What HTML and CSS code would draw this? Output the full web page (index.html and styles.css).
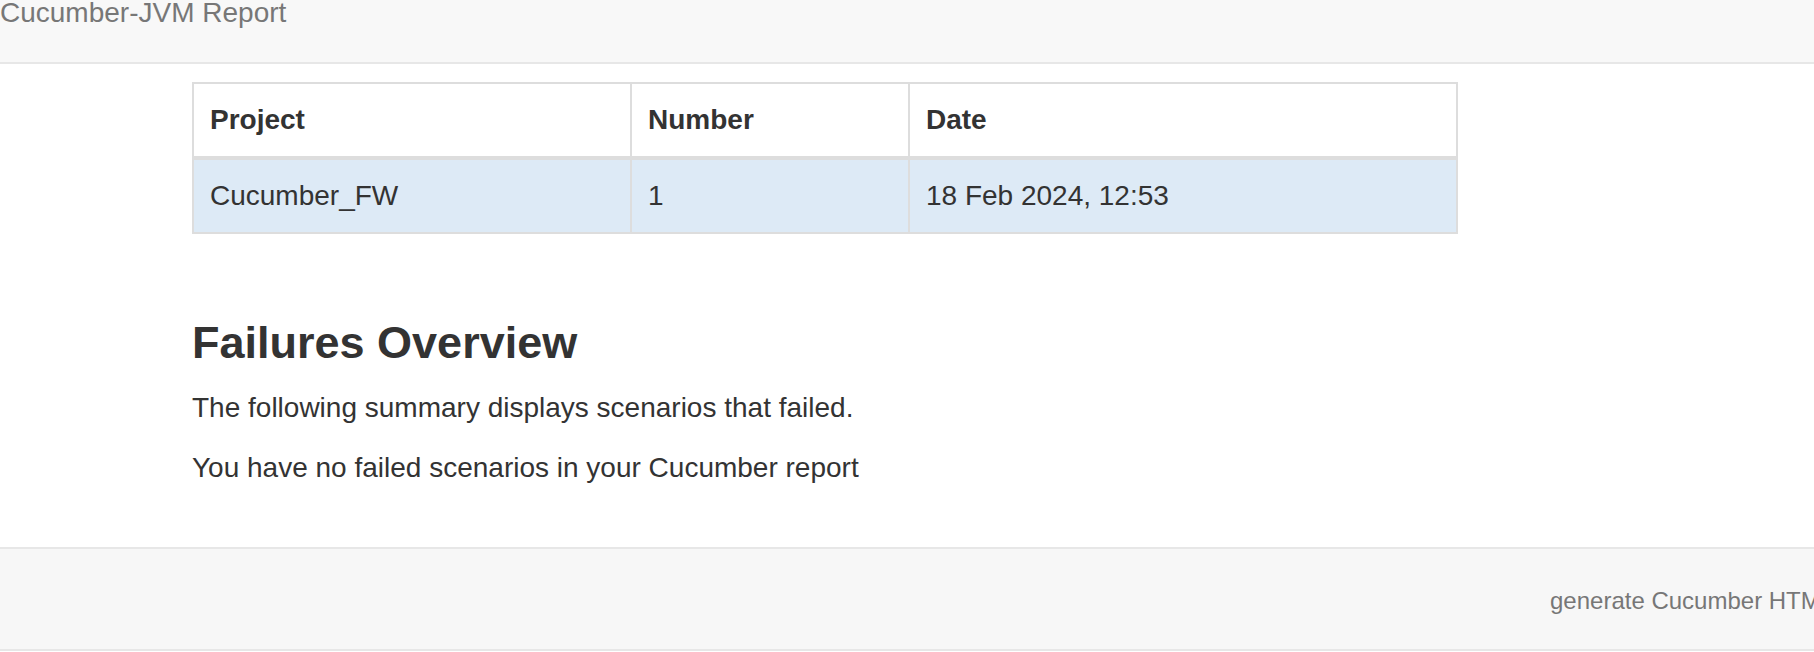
FILE: index.html
```html
<!DOCTYPE html>
<html lang="en">
<head>
<meta charset="utf-8">
<title>Cucumber-JVM Report</title>
<link rel="stylesheet" href="styles.css">
</head>
<body>
<header class="navbar">
  <div class="brand">Cucumber-JVM Report</div>
</header>
<main class="container">
  <table class="build-table">
    <colgroup>
      <col class="col-project">
      <col class="col-number">
      <col class="col-date">
    </colgroup>
    <thead>
      <tr>
        <th>Project</th>
        <th>Number</th>
        <th>Date</th>
      </tr>
    </thead>
    <tbody>
      <tr class="info">
        <td>Cucumber_FW</td>
        <td>1</td>
        <td>18 Feb 2024, 12:53</td>
      </tr>
    </tbody>
  </table>
  <h2 class="section-title">Failures Overview</h2>
  <p class="text">The following summary displays scenarios that failed.</p>
  <p class="text">You have no failed scenarios in your Cucumber report</p>
</main>
<footer class="footer">
  <div class="footer-text">generate Cucumber HTML reports</div>
</footer>
</body>
</html>
```
FILE: styles.css
```css
html, body {
  margin: 0;
  padding: 0;
  overflow: hidden;
}
body {
  font-family: "Liberation Sans", Arial, Helvetica, sans-serif;
  color: #333333;
  background: #ffffff;
  font-size: 28px;
  line-height: 40px;
}
.navbar {
  height: 62px;
  background: #f8f8f8;
  border-bottom: 2px solid #e7e7e7;
}
.brand {
  font-size: 28px;
  line-height: 26px;
  color: #777777;
  white-space: nowrap;
}
.container {
  padding: 18px 0 0 192px;
}
.build-table {
  width: 1266px;
  table-layout: fixed;
  border-collapse: collapse;
  border: 2px solid #dddddd;
}
.col-project { width: 438px; }
.col-number { width: 278px; }
.col-date { width: auto; }
.build-table th,
.build-table td {
  padding: 16px;
  text-align: left;
  border: 2px solid #dddddd;
  line-height: 40px;
  vertical-align: top;
  white-space: nowrap;
}
.build-table th {
  font-weight: bold;
  border-bottom: 4px solid #dddddd;
}
.build-table tr.info td {
  background: #ddeaf6;
}
.section-title {
  margin: 84px 0 20px;
  font-size: 45px;
  line-height: 50px;
  font-weight: bold;
  color: #333333;
}
.text {
  margin: 0 0 20px;
}
.footer {
  margin-top: 59px;
  height: 100px;
  background: #f7f7f7;
  border-top: 2px solid #e7e7e7;
  border-bottom: 2px solid #e7e7e7;
  box-sizing: content-box;
}
.footer-text {
  padding: 35px 0 0 1550px;
  font-size: 24px;
  line-height: 34px;
  color: #777777;
  white-space: nowrap;
}
```
